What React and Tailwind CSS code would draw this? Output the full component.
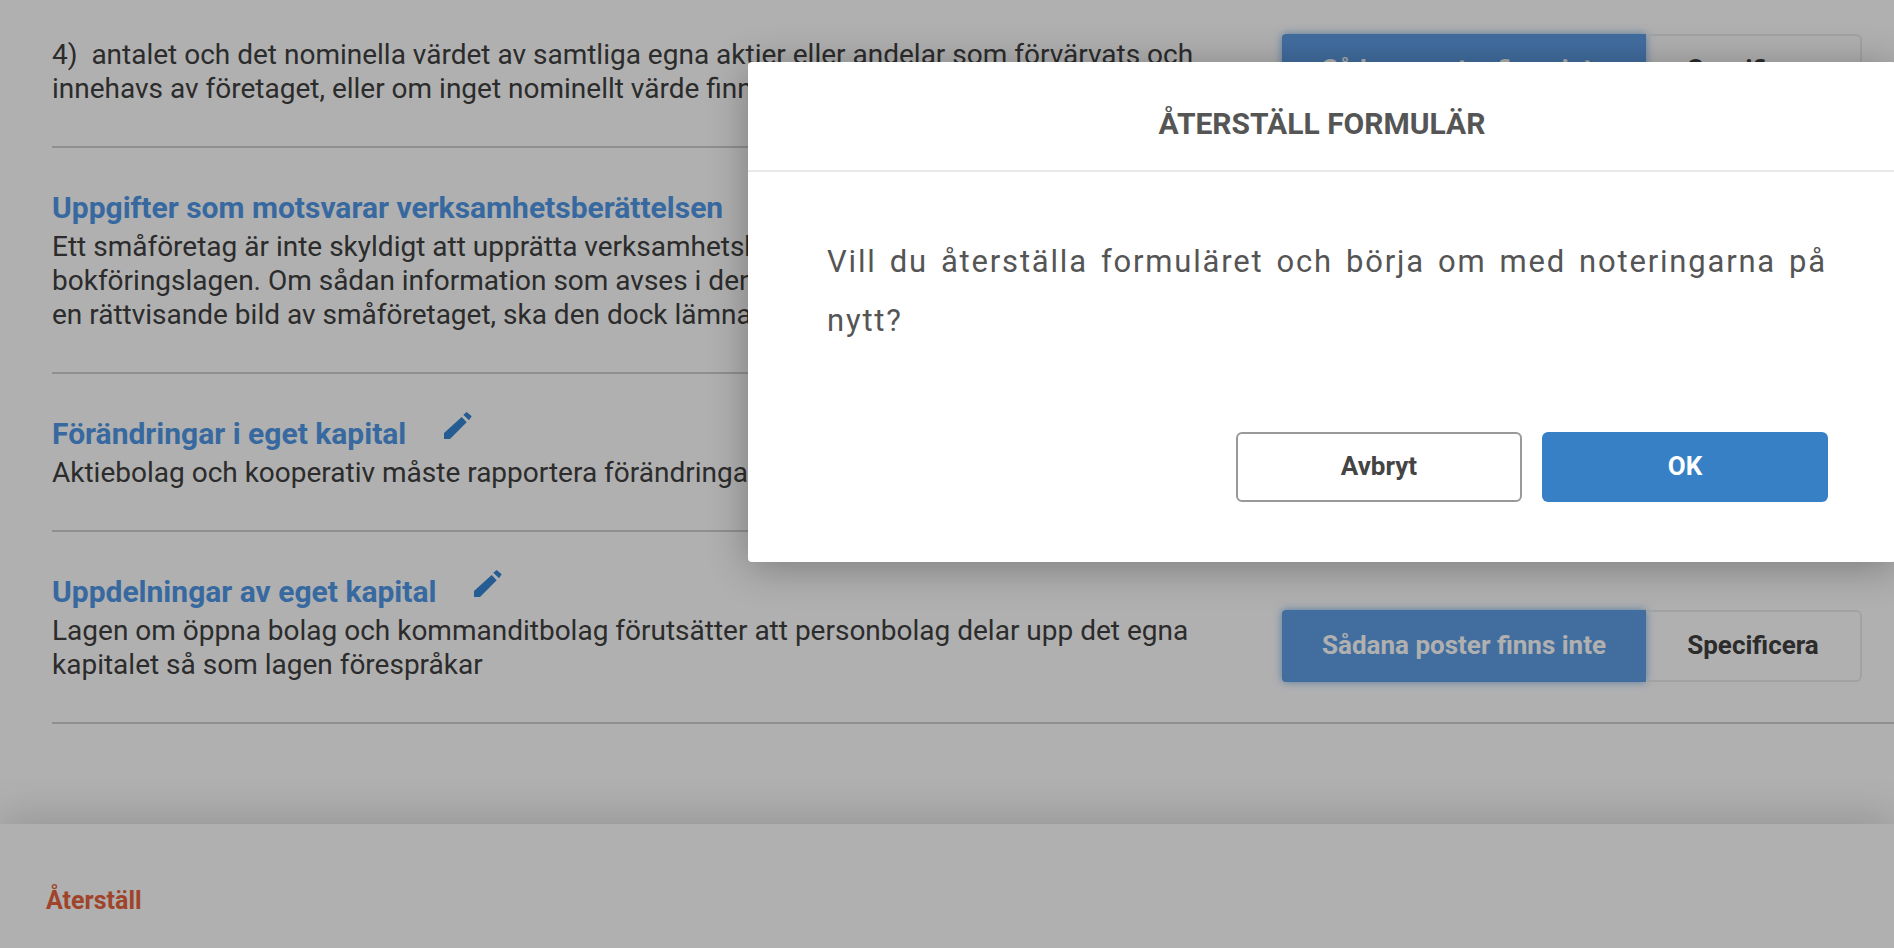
import React from "react";

function Pencil({ className }) {
  return (
    <svg viewBox="0 0 28 27" className={className} fill="currentColor">
      <path d="M0 21 17.7 5 22.7 10.3 6 27H0Z" />
      <path d="M19.3 2.7 22.7 0 27.7 4.3 25 8.3Z" />
    </svg>
  );
}

function Choice() {
  return (
    <div className="flex shrink-0 w-[580px] h-[72px] mr-[32px] text-[26px] font-bold">
      <button className="w-[364px] pb-[2px] bg-[#5f9fe6] text-white rounded-l-[4px] shadow-[0_0_8px_rgba(95,159,230,0.8)]">Sådana poster finns inte</button>
      <button className="flex-1 pb-[2px] border-2 border-l-0 border-[#ebebeb] rounded-r-[6px] text-[#404040]">Specificera</button>
    </div>
  );
}

// rows 2 and 3 have their buttons behind the dialog, so they are left out
function Row({ title, edit, lines, first, choice }) {
  return (
    <section className={`flex items-end justify-between border-b-2 border-[#cfcfcf] pb-[40px] ${first ? "" : "pt-[38px]"}`}>
      <div className="w-[1200px] whitespace-pre">
        {title && (
          <h3 className="flex text-[30px] leading-[44px] font-bold text-[#5099e8]">
            {title}
            {edit && <Pencil className="w-[28px] h-[27px] ml-[38px] text-[#3686d4]" />}
          </h3>
        )}
        {lines.map((l) => (
          <p key={l} className="text-[28px] leading-[34px] text-[#404040]">{l}</p>
        ))}
      </div>
      {choice && <Choice />}
    </section>
  );
}

export default function App() {
  return (
    <div className="relative h-[948px] overflow-hidden bg-white font-['Roboto',sans-serif]">
      <div className="flex flex-col h-full">
        <main className="flex-1 pl-[52px] pt-[34px] overflow-hidden">
          <Row
            first
            choice
            lines={[
              "4)  antalet och det nominella värdet av samtliga egna aktier eller andelar som förvärvats och",
              "innehavs av företaget, eller om inget nominellt värde finns",
            ]}
          />
          <Row
            title="Uppgifter som motsvarar verksamhetsberättelsen"
            lines={[
              "Ett småföretag är inte skyldigt att upprätta verksamhetsberättelse",
              "bokföringslagen. Om sådan information som avses i den",
              "en rättvisande bild av småföretaget, ska den dock lämna",
            ]}
          />
          <Row title="Förändringar i eget kapital" edit lines={["Aktiebolag och kooperativ måste rapportera förändringar"]} />
          <Row
            title="Uppdelningar av eget kapital"
            edit
            choice
            lines={[
              "Lagen om öppna bolag och kommanditbolag förutsätter att personbolag delar upp det egna",
              "kapitalet så som lagen förespråkar",
            ]}
          />
        </main>
        <footer className="h-[124px] shrink-0 flex items-center pl-[46px] pt-[29px] bg-white shadow-[0_-12px_36px_rgba(0,0,0,0.13)]">
          <a className="text-[25px] font-bold text-[#e8633c]">Återställ</a>
        </footer>
      </div>

      <div className="absolute inset-0 bg-black/[0.31]" />

      <div className="absolute left-[748px] top-[62px] w-[1148px] h-[500px] rounded-[4px] bg-white text-[#555] shadow-[0_5px_40px_rgba(0,0,0,0.3)]">
        <h2 className="h-[110px] flex items-center justify-center pt-[15px] border-b-2 border-[#e8e8e8] text-[30px] font-bold">ÅTERSTÄLL FORMULÄR</h2>
        <p className="ml-[79px] mr-[69px] mt-[60px] text-[31px] leading-[59px] tracking-[1.8px] text-justify">
          Vill du återställa formuläret och börja om med noteringarna på nytt?
        </p>
        <div className="flex justify-end gap-[20px] mr-[68px] mt-[82px] text-[26px] font-bold">
          <button className="w-[286px] h-[70px] pb-[2px] rounded-[6px] border-2 border-[#999] bg-white text-[#444]">Avbryt</button>
          <button className="w-[286px] h-[70px] pb-[2px] rounded-[6px] bg-[#3880c6] text-white">OK</button>
        </div>
      </div>
    </div>
  );
}
